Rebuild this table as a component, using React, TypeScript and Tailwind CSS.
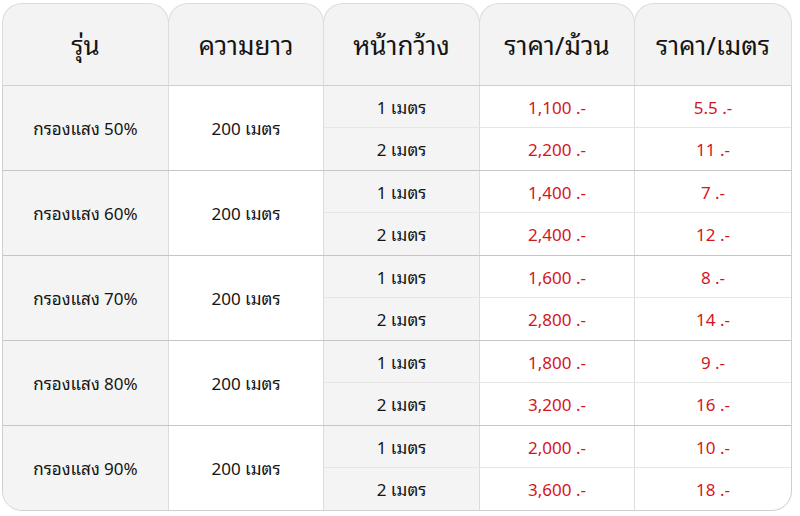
import React from "react";

// ข้อมูลราคาแต่ละรุ่น
const groups = [
  { name: "กรองแสง 50%", rows: [["1,100 .-", "5.5 .-"], ["2,200 .-", "11 .-"]] },
  { name: "กรองแสง 60%", rows: [["1,400 .-", "7 .-"], ["2,400 .-", "12 .-"]] },
  { name: "กรองแสง 70%", rows: [["1,600 .-", "8 .-"], ["2,800 .-", "14 .-"]] },
  { name: "กรองแสง 80%", rows: [["1,800 .-", "9 .-"], ["3,200 .-", "16 .-"]] },
  { name: "กรองแสง 90%", rows: [["2,000 .-", "10 .-"], ["3,600 .-", "18 .-"]] },
];

const headers = ["รุ่น", "ความยาว", "หน้ากว้าง", "ราคา/ม้วน", "ราคา/เมตร"];

export default function App() {
  return (
    <div
      className="min-h-[516px] w-[800px] bg-white pl-[2px] pt-[3px] text-[#151515]"
      style={{
        fontFamily:
          '"Noto Sans Thai Looped", Loma, Garuda, Waree, "Tlwg Typo", Tahoma, "Noto Sans Thai", "Noto Sans", sans-serif',
      }}
    >
      <div className="w-[790px]">
        {/* หัวตาราง */}
        <div className="grid grid-cols-[167px_155px_156px_155px_157px]">
          {headers.map((h, i) => (
            <div
              key={h}
              className={
                "flex h-[82px] items-center justify-center rounded-t-[20px] border border-b-0 border-[#dcdcdc] bg-[#f3f3f3] pb-[2px] text-[26px] " +
                (i > 0 ? "-ml-px" : "")
              }
            >
              {h}
            </div>
          ))}
        </div>

        {/* เนื้อหาตาราง */}
        <div className="overflow-hidden rounded-b-[20px] border border-[#cfcfcf] text-[17px]">
          {groups.map((g, gi) => (
            <div
              key={g.name}
              className={
                "grid grid-cols-[166px_155px_156px_155px_156px] " +
                (gi < groups.length - 1 ? "border-b border-[#c6c6c6]" : "")
              }
            >
              <div className="row-span-2 flex items-center justify-center border-r border-[#dcdcdc] bg-[#f4f4f4]">
                {g.name}
              </div>
              <div className="row-span-2 flex items-center justify-center border-r border-[#dcdcdc] bg-white">
                200 เมตร
              </div>
              {g.rows.map((r, ri) => (
                <React.Fragment key={ri}>
                  <div
                    className={
                      "col-start-3 flex h-[42px] items-center justify-center border-r border-[#dcdcdc] bg-[#f4f4f4] " +
                      (ri === 0 ? "border-b border-b-[#e6e6e6]" : "")
                    }
                  >
                    {ri + 1} เมตร
                  </div>
                  <div
                    className={
                      "flex items-center justify-center border-r border-[#dcdcdc] text-[#d3161e] " +
                      (ri === 0 ? "border-b border-b-[#e6e6e6]" : "")
                    }
                  >
                    {r[0]}
                  </div>
                  <div
                    className={
                      "flex items-center justify-center text-[#d3161e] " +
                      (ri === 0 ? "border-b border-b-[#e6e6e6]" : "")
                    }
                  >
                    {r[1]}
                  </div>
                </React.Fragment>
              ))}
            </div>
          ))}
        </div>
      </div>
    </div>
  );
}
